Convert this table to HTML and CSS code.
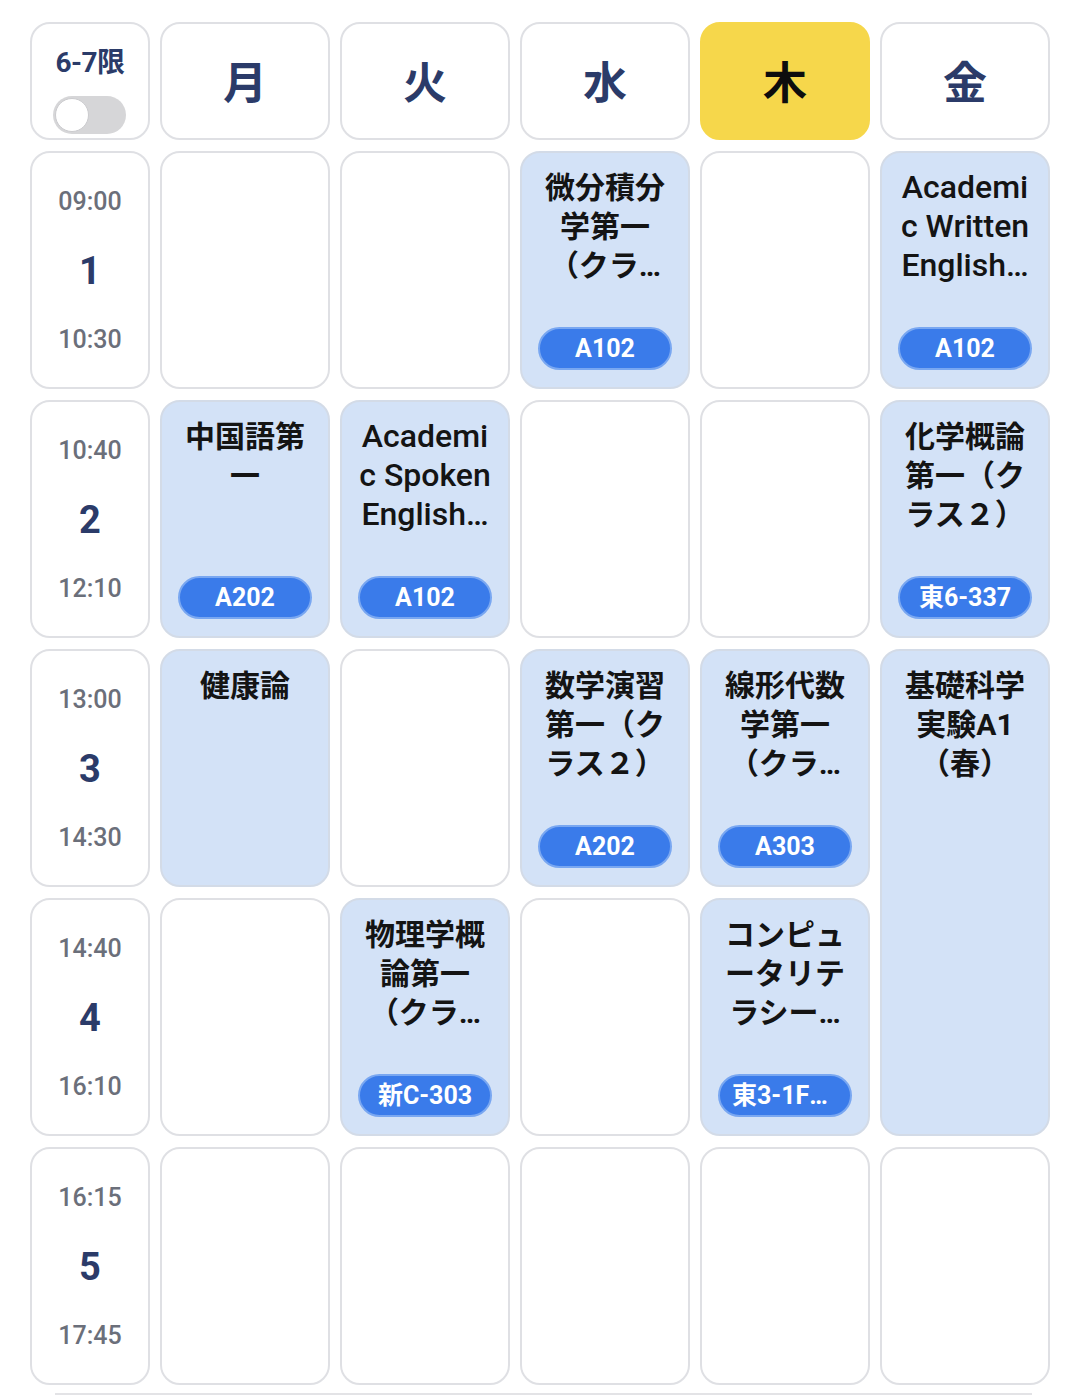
FILE: index.html
```html
<!DOCTYPE html>
<html lang="ja">
<head>
<meta charset="utf-8">
<title>時間割</title>
<link rel="stylesheet" href="styles.css">
</head>
<body>
<div class="page">
  <div class="timetable">
    <div class="cell head corner">
      <div class="corner-label">6-7限</div>
      <div class="toggle"><span class="knob"></span></div>
    </div>
    <div class="cell head day">月</div>
    <div class="cell head day">火</div>
    <div class="cell head day">水</div>
    <div class="cell head day today">木</div>
    <div class="cell head day">金</div>

    <!-- period 1 -->
    <div class="cell time"><span class="t">09:00</span><span class="num">1</span><span class="t">10:30</span></div>
    <div class="cell"></div>
    <div class="cell"></div>
    <div class="cell course"><div class="title" title="微分積分学第一（クラス２）">微分積分学第一（クラ…</div><div class="room">A102</div></div>
    <div class="cell"></div>
    <div class="cell course"><div class="title en" title="Academic Written English">Academic Written English…</div><div class="room">A102</div></div>

    <!-- period 2 -->
    <div class="cell time"><span class="t">10:40</span><span class="num">2</span><span class="t">12:10</span></div>
    <div class="cell course"><div class="title">中国語第一</div><div class="room">A202</div></div>
    <div class="cell course"><div class="title en" title="Academic Spoken English">Academic Spoken English…</div><div class="room">A102</div></div>
    <div class="cell"></div>
    <div class="cell"></div>
    <div class="cell course"><div class="title">化学概論第一（クラス２）</div><div class="room">東6-337</div></div>

    <!-- period 3 -->
    <div class="cell time"><span class="t">13:00</span><span class="num">3</span><span class="t">14:30</span></div>
    <div class="cell course"><div class="title">健康論</div></div>
    <div class="cell"></div>
    <div class="cell course"><div class="title">数学演習第一（クラス２）</div><div class="room">A202</div></div>
    <div class="cell course"><div class="title" title="線形代数学第一（クラス２）">線形代数学第一（クラ…</div><div class="room">A303</div></div>
    <div class="cell course span2"><div class="title">基礎科学実験A1（春）</div></div>

    <!-- period 4 -->
    <div class="cell time"><span class="t">14:40</span><span class="num">4</span><span class="t">16:10</span></div>
    <div class="cell"></div>
    <div class="cell course"><div class="title" title="物理学概論第一（クラス２）">物理学概論第一（クラ…</div><div class="room">新C-303</div></div>
    <div class="cell"></div>
    <div class="cell course"><div class="title" title="コンピュータリテラシー">コンピュータリテラシー…</div><div class="room">東3-1F情報実習室</div></div>

    <!-- period 5 -->
    <div class="cell time"><span class="t">16:15</span><span class="num">5</span><span class="t">17:45</span></div>
    <div class="cell"></div>
    <div class="cell"></div>
    <div class="cell"></div>
    <div class="cell"></div>
    <div class="cell"></div>
  </div>
  <div class="footer-line"></div>
</div>
</body>
</html>
```

FILE: styles.css
```css
* { box-sizing: border-box; }

html, body {
  margin: 0;
  padding: 0;
  background: #ffffff;
}

body {
  font-family: Roboto, "Noto Sans CJK JP", "Noto Sans", sans-serif;
  color: #111111;
}

.page {
  padding: 22px 30px 0 30px;
}

.timetable {
  display: grid;
  grid-template-columns: 120px repeat(5, 170px);
  grid-template-rows: 118px repeat(5, 238px);
  column-gap: 10px;
  row-gap: 11px;
}

.cell {
  border: 2px solid #dfe0e4;
  border-radius: 20px;
  background: #ffffff;
  min-width: 0;
}

.head {
  display: flex;
  align-items: center;
  justify-content: center;
}

.day {
  font-family: "Noto Sans CJK JP", sans-serif;
  font-weight: 700;
  font-size: 44px;
  color: #2b3b69;
  padding-bottom: 2px;
}

.day.today {
  background: #f6d74b;
  border-color: #f6d74b;
  color: #0d0d0d;
}

.corner {
  flex-direction: column;
  justify-content: flex-start;
  padding-top: 22px;
  gap: 16px;
}

.corner-label {
  font-family: Roboto, "Noto Sans CJK JP", sans-serif;
  font-weight: 700;
  font-size: 28px;
  line-height: 34px;
  color: #2b3b69;
  letter-spacing: -0.5px;
}

.toggle {
  width: 73px;
  height: 38px;
  border-radius: 19px;
  background: #d6d6d8;
  position: relative;
  margin-right: 2px;
}

.knob {
  position: absolute;
  left: 2px;
  top: 2px;
  width: 34px;
  height: 34px;
  border-radius: 50%;
  background: #ffffff;
  border: 1px solid #cbcbce;
}

.time {
  display: flex;
  flex-direction: column;
  align-items: center;
  justify-content: space-between;
  padding: 34px 0 32px 0;
}

.time .t {
  font-family: Roboto, sans-serif;
  font-size: 25px;
  line-height: 30px;
  font-weight: 500;
  color: #6b6f7a;
}

.time .num {
  font-family: Roboto, sans-serif;
  font-size: 38px;
  line-height: 40px;
  font-weight: 700;
  color: #2b3b69;
}

.course {
  background: #d3e2f7;
  border-color: #d3dbe7;
  display: flex;
  flex-direction: column;
  align-items: center;
  justify-content: space-between;
  padding: 15px 14px 17px 14px;
}

.span2 {
  grid-row: span 2;
}

.title {
  width: 100%;
  text-align: center;
  font-family: Roboto, "Noto Sans CJK JP", sans-serif;
  font-weight: 700;
  font-size: 30px;
  line-height: 39px;
  max-height: 117px;
  color: #141414;
  overflow-wrap: anywhere;
  overflow: hidden;
}

.title.en {
  font-weight: 500;
  font-size: 32px;
}

.room {
  width: 134px;
  height: 43px;
  border-radius: 22px;
  background: #3a7bea;
  border: 2px solid #79a7f1;
  color: #ffffff;
  font-family: Roboto, "Noto Sans CJK JP", sans-serif;
  font-weight: 700;
  font-size: 25px;
  line-height: 39px;
  text-align: center;
  padding: 0 12px;
  white-space: nowrap;
  overflow: hidden;
  text-overflow: ellipsis;
  flex-shrink: 0;
}

.footer-line {
  margin: 8px 18px 0 25px;
  border-top: 2px solid #e3e3e6;
}
```
